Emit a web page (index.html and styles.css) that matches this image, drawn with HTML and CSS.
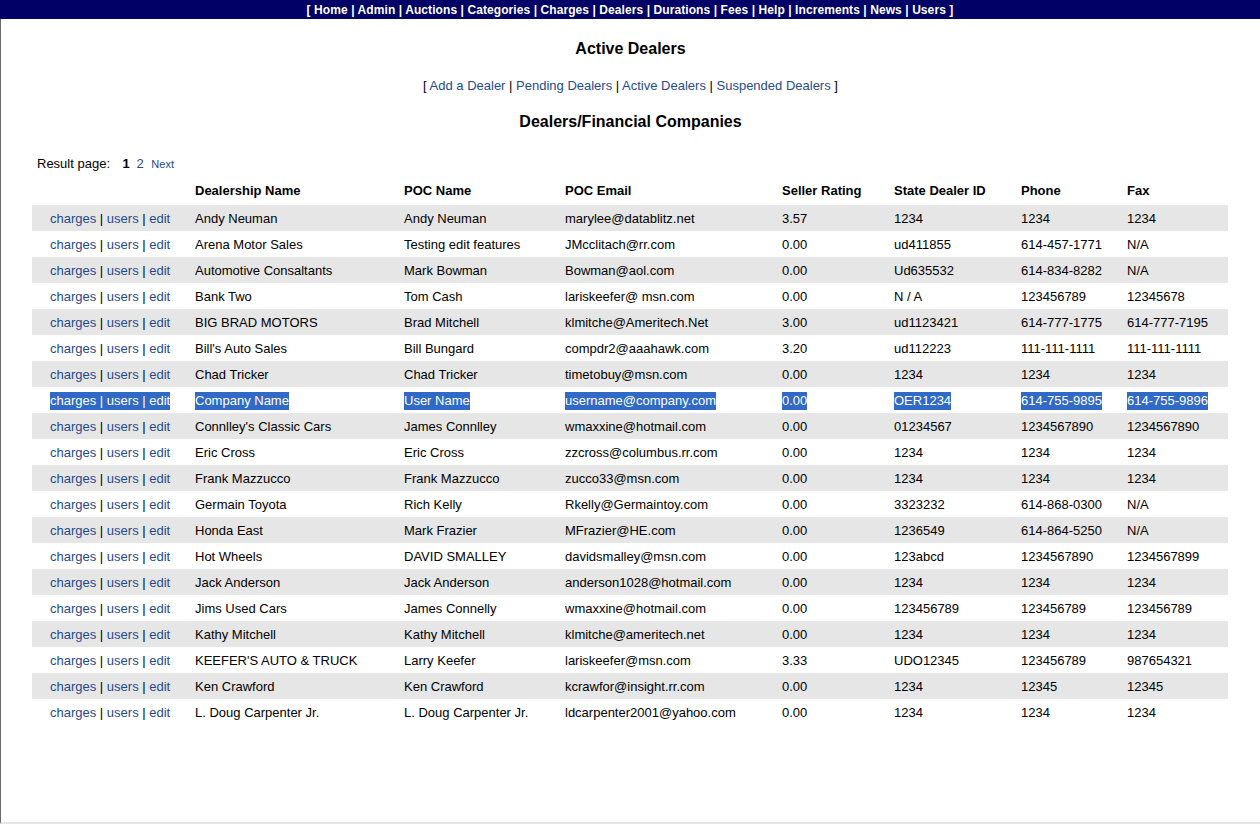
FILE: index.html
```html
<!DOCTYPE html>
<html>
<head>
<meta charset="utf-8">
<title>Active Dealers</title>
<link rel="stylesheet" href="styles.css">
</head>
<body>
<div class="nav">[ <a href="#">Home</a> | <a href="#">Admin</a> | <a href="#">Auctions</a> | <a href="#">Categories</a> | <a href="#">Charges</a> | <a href="#">Dealers</a> | <a href="#">Durations</a> | <a href="#">Fees</a> | <a href="#">Help</a> | <a href="#">Increments</a> | <a href="#">News</a> | <a href="#">Users</a> ]</div>
<div class="frame">
  <h1 class="title">Active Dealers</h1>
  <div class="sublinks">[ <a href="#">Add a Dealer</a> | <a href="#">Pending Dealers</a> | <a href="#">Active Dealers</a> | <a href="#">Suspended Dealers</a> ]</div>
  <h2 class="title2">Dealers/Financial Companies</h2>
  <div class="pager">Result page: <b class="cur">1</b> <a href="#" class="pg">2</a> <a href="#" class="next">Next</a></div>
  <table class="dealers">
    <thead>
      <tr><th class="c1"></th><th class="c2">Dealership Name</th><th class="c3">POC Name</th><th class="c4">POC Email</th><th class="c5">Seller Rating</th><th class="c6">State Dealer ID</th><th class="c7">Phone</th><th class="c8">Fax</th></tr>
    </thead>
    <tbody>
      <tr class="odd"><td class="act"><a href="#">charges</a> | <a href="#">users</a> | <a href="#">edit</a></td><td>Andy Neuman</td><td>Andy Neuman</td><td>marylee@datablitz.net</td><td>3.57</td><td>1234</td><td>1234</td><td>1234</td></tr>
      <tr><td class="act"><a href="#">charges</a> | <a href="#">users</a> | <a href="#">edit</a></td><td>Arena Motor Sales</td><td>Testing edit features</td><td>JMcclitach@rr.com</td><td>0.00</td><td>ud411855</td><td>614-457-1771</td><td>N/A</td></tr>
      <tr class="odd"><td class="act"><a href="#">charges</a> | <a href="#">users</a> | <a href="#">edit</a></td><td>Automotive Consaltants</td><td>Mark Bowman</td><td>Bowman@aol.com</td><td>0.00</td><td>Ud635532</td><td>614-834-8282</td><td>N/A</td></tr>
      <tr><td class="act"><a href="#">charges</a> | <a href="#">users</a> | <a href="#">edit</a></td><td>Bank Two</td><td>Tom Cash</td><td>lariskeefer@ msn.com</td><td>0.00</td><td>N / A</td><td>123456789</td><td>12345678</td></tr>
      <tr class="odd"><td class="act"><a href="#">charges</a> | <a href="#">users</a> | <a href="#">edit</a></td><td>BIG BRAD MOTORS</td><td>Brad Mitchell</td><td>klmitche@Ameritech.Net</td><td>3.00</td><td>ud1123421</td><td>614-777-1775</td><td>614-777-7195</td></tr>
      <tr><td class="act"><a href="#">charges</a> | <a href="#">users</a> | <a href="#">edit</a></td><td>Bill's Auto Sales</td><td>Bill Bungard</td><td>compdr2@aaahawk.com</td><td>3.20</td><td>ud112223</td><td>111-111-1111</td><td>111-111-1111</td></tr>
      <tr class="odd"><td class="act"><a href="#">charges</a> | <a href="#">users</a> | <a href="#">edit</a></td><td>Chad Tricker</td><td>Chad Tricker</td><td>timetobuy@msn.com</td><td>0.00</td><td>1234</td><td>1234</td><td>1234</td></tr>
      <tr class="sel"><td class="act"><span class="hl">charges | users | edit</span></td><td><span class="hl">Company Name</span></td><td><span class="hl">User Name</span></td><td><span class="hl">username@company.com</span></td><td><span class="hl">0.00</span></td><td><span class="hl">OER1234</span></td><td><span class="hl">614-755-9895</span></td><td><span class="hl">614-755-9896</span></td></tr>
      <tr class="odd"><td class="act"><a href="#">charges</a> | <a href="#">users</a> | <a href="#">edit</a></td><td>Connlley's Classic Cars</td><td>James Connlley</td><td>wmaxxine@hotmail.com</td><td>0.00</td><td>01234567</td><td>1234567890</td><td>1234567890</td></tr>
      <tr><td class="act"><a href="#">charges</a> | <a href="#">users</a> | <a href="#">edit</a></td><td>Eric Cross</td><td>Eric Cross</td><td>zzcross@columbus.rr.com</td><td>0.00</td><td>1234</td><td>1234</td><td>1234</td></tr>
      <tr class="odd"><td class="act"><a href="#">charges</a> | <a href="#">users</a> | <a href="#">edit</a></td><td>Frank Mazzucco</td><td>Frank Mazzucco</td><td>zucco33@msn.com</td><td>0.00</td><td>1234</td><td>1234</td><td>1234</td></tr>
      <tr><td class="act"><a href="#">charges</a> | <a href="#">users</a> | <a href="#">edit</a></td><td>Germain Toyota</td><td>Rich Kelly</td><td>Rkelly@Germaintoy.com</td><td>0.00</td><td>3323232</td><td>614-868-0300</td><td>N/A</td></tr>
      <tr class="odd"><td class="act"><a href="#">charges</a> | <a href="#">users</a> | <a href="#">edit</a></td><td>Honda East</td><td>Mark Frazier</td><td>MFrazier@HE.com</td><td>0.00</td><td>1236549</td><td>614-864-5250</td><td>N/A</td></tr>
      <tr><td class="act"><a href="#">charges</a> | <a href="#">users</a> | <a href="#">edit</a></td><td>Hot Wheels</td><td>DAVID SMALLEY</td><td>davidsmalley@msn.com</td><td>0.00</td><td>123abcd</td><td>1234567890</td><td>1234567899</td></tr>
      <tr class="odd"><td class="act"><a href="#">charges</a> | <a href="#">users</a> | <a href="#">edit</a></td><td>Jack Anderson</td><td>Jack Anderson</td><td>anderson1028@hotmail.com</td><td>0.00</td><td>1234</td><td>1234</td><td>1234</td></tr>
      <tr><td class="act"><a href="#">charges</a> | <a href="#">users</a> | <a href="#">edit</a></td><td>Jims Used Cars</td><td>James Connelly</td><td>wmaxxine@hotmail.com</td><td>0.00</td><td>123456789</td><td>123456789</td><td>123456789</td></tr>
      <tr class="odd"><td class="act"><a href="#">charges</a> | <a href="#">users</a> | <a href="#">edit</a></td><td>Kathy Mitchell</td><td>Kathy Mitchell</td><td>klmitche@ameritech.net</td><td>0.00</td><td>1234</td><td>1234</td><td>1234</td></tr>
      <tr><td class="act"><a href="#">charges</a> | <a href="#">users</a> | <a href="#">edit</a></td><td>KEEFER'S AUTO &amp; TRUCK</td><td>Larry Keefer</td><td>lariskeefer@msn.com</td><td>3.33</td><td>UDO12345</td><td>123456789</td><td>987654321</td></tr>
      <tr class="odd"><td class="act"><a href="#">charges</a> | <a href="#">users</a> | <a href="#">edit</a></td><td>Ken Crawford</td><td>Ken Crawford</td><td>kcrawfor@insight.rr.com</td><td>0.00</td><td>1234</td><td>12345</td><td>12345</td></tr>
      <tr><td class="act"><a href="#">charges</a> | <a href="#">users</a> | <a href="#">edit</a></td><td>L. Doug Carpenter Jr.</td><td>L. Doug Carpenter Jr.</td><td>ldcarpenter2001@yahoo.com</td><td>0.00</td><td>1234</td><td>1234</td><td>1234</td></tr>
    </tbody>
  </table>
</div>
</body>
</html>
```

FILE: styles.css
```css
html, body {
  margin: 0;
  padding: 0;
  background: #fff;
}
body {
  font-family: "Liberation Sans", Arial, sans-serif;
  font-size: 13px;
  color: #000;
}
a {
  color: #1f4a8c;
  text-decoration: none;
}
.nav {
  background: #000066;
  color: #fff;
  height: 19px;
  line-height: 19px;
  padding-top: 1px;
  box-sizing: border-box;
  text-align: center;
  font-weight: bold;
  font-size: 12px;
  letter-spacing: 0.08px;
}
.nav a {
  color: #fff;
}
.frame {
  border-left: 1px solid #6b6b6b;
  border-bottom: 2px solid #e6e6e6;
  height: 803px;
  overflow: hidden;
}
.title {
  margin: 20px 0 0 0;
  font-size: 16px;
  line-height: 20px;
  text-align: center;
  font-weight: bold;
}
.sublinks {
  margin-top: 19px;
  line-height: 16px;
  text-align: center;
  color: #000;
}
.title2 {
  margin: 18px 0 0 0;
  font-size: 16px;
  line-height: 20px;
  text-align: center;
  font-weight: bold;
}
.pager {
  margin: 24px 0 0 36px;
  line-height: 16px;
  font-size: 13px;
}
.pager .cur {
  margin-left: 9px;
}
.pager .pg {
  margin-left: 3px;
}
.pager .next {
  font-size: 11px;
  margin-left: 4px;
}
.dealers {
  margin: 5px 0 0 31px;
  width: 1196px;
  border-collapse: collapse;
  table-layout: fixed;
}
.dealers th {
  text-align: left;
  font-weight: bold;
  font-size: 13px;
  height: 26px;
  padding: 0 0 2px 3px;
  vertical-align: middle;
}
.dealers td {
  height: 26px;
  padding: 0 0 0 3px;
  white-space: nowrap;
  vertical-align: middle;
}
.dealers tr.odd td {
  background: #e6e6e6;
}
.dealers td.act {
  padding-left: 18px;
}
.c1 { width: 157px; }
.c2 { width: 206px; }
.c3 { width: 158px; }
.c4 { width: 214px; }
.c5 { width: 109px; }
.c6 { width: 124px; }
.c7 { width: 103px; }
.c8 { width: 101px; }
.hl {
  background: #3169c6;
  color: #fff;
  padding: 1px 0 2px 0;
}
```
